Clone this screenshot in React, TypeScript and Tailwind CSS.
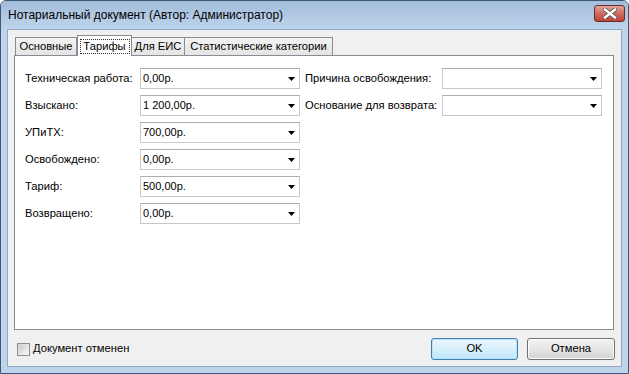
import React from "react";

const font = { fontFamily: '"Liberation Sans", Arial, sans-serif' };

function Arrow() {
  return (
    <svg width="7" height="4" viewBox="0 0 7 4" className="shrink-0">
      <path d="M0 0H7L3.5 4Z" fill="#000" />
    </svg>
  );
}

function Combo({ value, width = 160 }: { value: string; width?: number }) {
  return (
    <div
      className="h-[21px] bg-white border border-[#c5c8ce] border-t-[#abadb3] flex items-center pl-[2px] pr-[4px] text-[11px] text-black"
      style={{ width }}
    >
      <span className="flex-1 leading-none">{value}</span>
      <Arrow />
    </div>
  );
}

function Row({ label, value, labelW }: { label: string; value: string; labelW: number }) {
  return (
    <div className="flex items-center h-[21px]">
      <span className="text-[11.2px] text-black leading-none" style={{ width: labelW }}>
        {label}
      </span>
      <Combo value={value} />
    </div>
  );
}

export default function App() {
  const left: [string, string][] = [
    ["Техническая работа:", "0,00р."],
    ["Взыскано:", "1 200,00р."],
    ["УПиТХ:", "700,00р."],
    ["Освобождено:", "0,00р."],
    ["Тариф:", "500,00р."],
    ["Возвращено:", "0,00р."],
  ];
  const right: [string, string][] = [
    ["Причина освобождения:", ""],
    ["Основание для возврата:", ""],
  ];
  return (
    <div
      className="w-[629px] h-[374px] flex flex-col bg-[#bfd4eb] border border-[#3d5877] rounded-t-[6px] overflow-hidden"
      style={font}
    >
      {/* title bar */}
      <div className="h-[28px] shrink-0 flex items-start bg-gradient-to-b from-[#a2bcda] to-[#bed4ec] pl-[7px] pr-[3px]">
        <span className="mt-[8px] text-[12px] text-black leading-none">
          Нотариальный документ (Автор: Администратор)
        </span>
        <div className="ml-auto mt-[4px] w-[31px] h-[17px] rounded-[3px] border border-[#6b2a22] bg-gradient-to-b from-[#e3a399] via-[#cf6a5c] to-[#c0443a] flex items-center justify-center">
          <svg width="14" height="11" viewBox="0 0 14 11">
            <path
              d="M2 1.5L12 9.5M12 1.5L2 9.5"
              stroke="#5a5a5a"
              strokeWidth="4.2"
              strokeLinecap="square"
            />
            <path
              d="M2 1.5L12 9.5M12 1.5L2 9.5"
              stroke="#ffffff"
              strokeWidth="2.4"
              strokeLinecap="square"
            />
          </svg>
        </div>
      </div>

      {/* client */}
      <div className="flex-1 ml-[6px] mr-[6px] mb-[6px] bg-[#f0f0f0] border border-[#8ea8c6] flex flex-col pt-[5px] pb-[6px]">
        {/* tabs */}
        <div className="ml-[6px] mr-[7px] h-[20px] flex items-end relative z-10">
          <div className="ml-[1px] w-[62px] h-[18px] border border-b-0 border-[#898c95] bg-gradient-to-b from-[#f3f3f3] to-[#e4e4e4] text-[11.2px] text-black flex items-center justify-center leading-none">
            Основные
          </div>
          <div className="w-[55px] h-[21px] -mb-px border border-b-0 border-[#898c95] bg-white text-[11.2px] text-black flex items-start justify-center pt-[3px]">
            <span className="w-[50px] h-[15px] border border-dotted border-[#333] flex items-center justify-center leading-none">
              Тарифы
            </span>
          </div>
          <div className="w-[53px] h-[18px] border border-b-0 border-l-0 border-[#898c95] bg-gradient-to-b from-[#f3f3f3] to-[#e4e4e4] text-[11.2px] text-black flex items-center justify-center leading-none">
            Для ЕИС
          </div>
          <div className="w-[148px] h-[18px] border border-b-0 border-l-0 border-[#898c95] bg-gradient-to-b from-[#f3f3f3] to-[#e4e4e4] text-[11.2px] text-black flex items-center justify-center leading-none">
            Статистические категории
          </div>
        </div>

        {/* panel */}
        <div className="ml-[6px] mr-[7px] h-[275px] bg-white border border-[#898c95] pt-[12px] pl-[10px] flex">
          <div className="flex flex-col gap-[6px]">
            {left.map(([l, v]) => (
              <Row key={l} label={l} value={v} labelW={115} />
            ))}
          </div>
          <div className="ml-[5px] flex flex-col gap-[6px]">
            {right.map(([l, v]) => (
              <Row key={l} label={l} value={v} labelW={137} />
            ))}
          </div>
        </div>

        {/* bottom */}
        <div className="mt-[8px] h-[22px] flex items-center pl-[9px] pr-[6px]">
          <div className="w-[13px] h-[13px] border border-[#8e8f8f] bg-gradient-to-br from-[#d2d2d2] to-[#f8f8f8] p-[2px]">
            <div className="w-full h-full bg-gradient-to-br from-[#cbcbcb] to-[#f4f4f4]" />
          </div>
          <span className="ml-[3px] text-[11.2px] text-black leading-none">Документ отменен</span>
          <div className="ml-auto flex gap-[9px]">
            <div className="w-[87px] h-[22px] rounded-[3px] border border-[#3c7fb1] bg-gradient-to-b from-[#eaf6fd] via-[#d9f0fc] to-[#bee6fd] shadow-[inset_0_0_0_1px_#b9e3f9] flex items-center justify-center text-[11.2px] text-black leading-none">
              OK
            </div>
            <div className="w-[88px] h-[22px] rounded-[3px] border border-[#707070] bg-gradient-to-b from-[#f2f2f2] via-[#e6e6e6] to-[#d3d3d3] shadow-[inset_0_0_0_1px_#fcfcfc] flex items-center justify-center text-[11.2px] text-black leading-none">
              Отмена
            </div>
          </div>
        </div>
      </div>
    </div>
  );
}
